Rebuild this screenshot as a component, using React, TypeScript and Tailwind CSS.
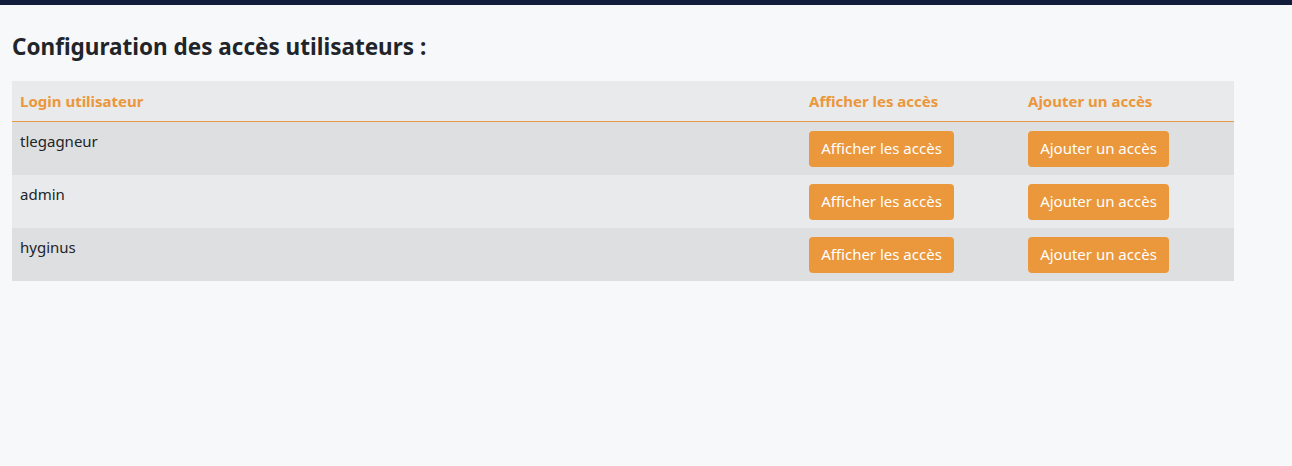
import React from "react";

const users = ["tlegagneur", "admin", "hyginus"];

export default function App() {
  return (
    <div className="min-h-[466px] bg-[#f7f8fa] text-[#212529]" style={{ fontFamily: '"Noto Sans", "Open Sans", sans-serif' }}>
      <div className="h-[5px] bg-[#111d3a]" />
      <div className="px-3">
        <h1 className="pt-[26px] pb-[19px] text-[22.5px] font-bold leading-[31px] text-[#212529]">
          Configuration des accès utilisateurs :
        </h1>
        <table className="w-[1222px] border-separate border-spacing-0 text-[15px]">
          <thead>
            <tr className="bg-[#e9eaec]">
              <th className="h-[41px] w-[789px] border-b border-[#e99a45] px-2 text-left align-middle font-bold text-[#eb973b]">Login utilisateur</th>
              <th className="w-[219px] border-b border-[#e99a45] px-2 text-left align-middle font-bold text-[#eb973b]">Afficher les accès</th>
              <th className="border-b border-[#e99a45] px-2 text-left align-middle font-bold text-[#eb973b]">Ajouter un accès</th>
            </tr>
          </thead>
          <tbody>
            {users.map((u, i) => (
              <tr key={u} className={i % 2 === 0 ? "bg-[#dedfe1]" : "bg-[#e9eaec]"}>
                <td className="h-[53px] px-2 pt-[7px] align-top leading-[24px]">{u}</td>
                <td className="px-2 align-middle">
                  <button className="h-[36px] w-[145px] rounded-[4px] bg-[#eb973b] text-[15px] text-white">Afficher les accès</button>
                </td>
                <td className="px-2 align-middle">
                  <button className="h-[36px] w-[141px] rounded-[4px] bg-[#eb973b] text-[15px] text-white">Ajouter un accès</button>
                </td>
              </tr>
            ))}
          </tbody>
        </table>
      </div>
    </div>
  );
}
